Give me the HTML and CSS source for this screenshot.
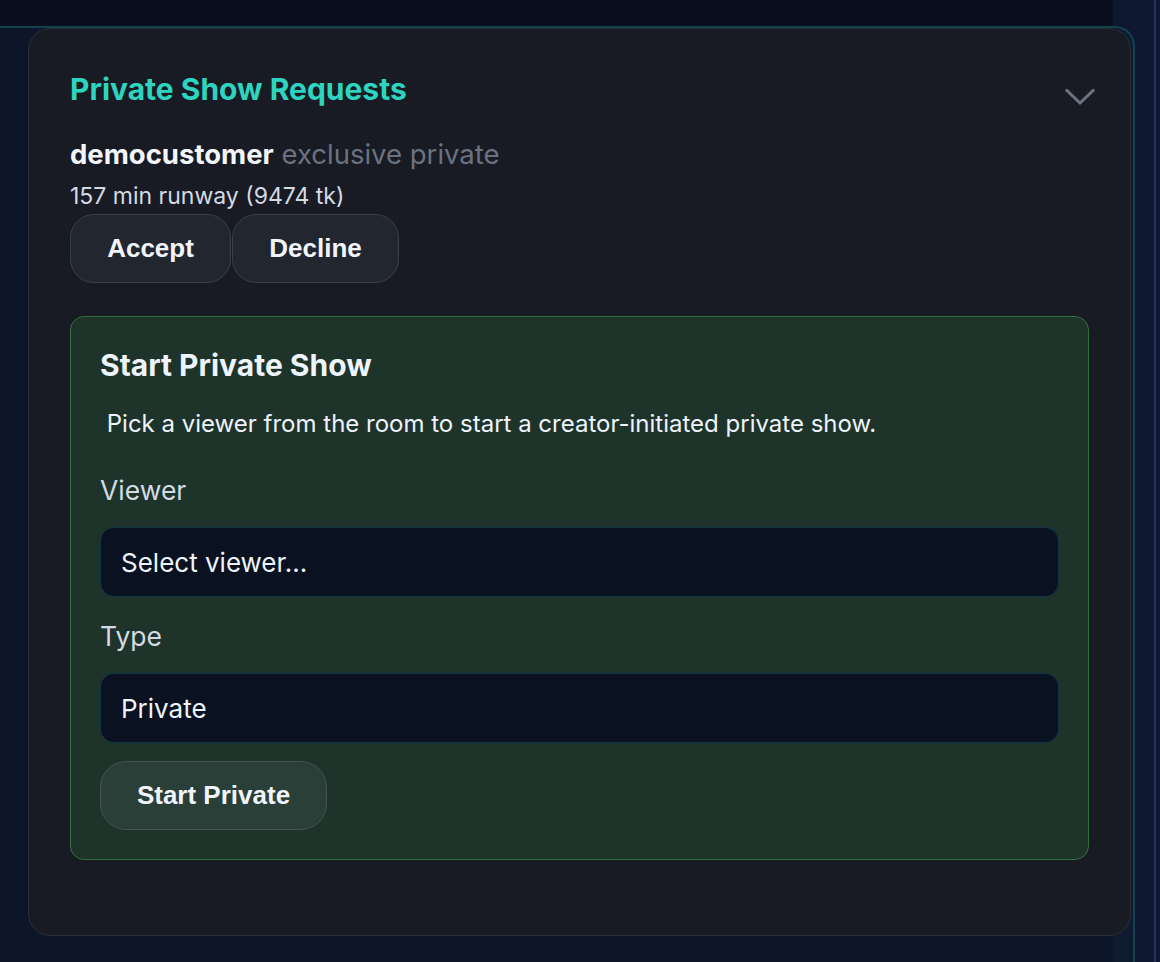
FILE: index.html
```html
<!DOCTYPE html>
<html lang="en">
<head>
    <meta charset="UTF-8">
    <meta name="viewport" content="width=device-width, initial-scale=1.0">
    <title>Private Show Requests</title>
    <link rel="stylesheet" href="styles.css">
</head>
<body>
    <!-- Side panel shell -->
    <div class="shell">
        <section class="card">
            <header class="card-head">
                <h2 class="card-title">Private Show Requests</h2>
                <button class="collapse" aria-label="Collapse">
                    <svg width="30" height="18" viewBox="0 0 30 18" fill="none">
                        <path d="M2 2.5 L15 15 L28 2.5" stroke="#6b7280" stroke-width="3" stroke-linecap="square"/>
                    </svg>
                </button>
            </header>

            <!-- Pending request -->
            <div class="request">
                <p class="request-who"><strong>democustomer</strong> <span class="request-type">exclusive private</span></p>
                <p class="request-meta">157 min runway (9474 tk)</p>
                <div class="actions">
                    <button class="btn">Accept</button>
                    <button class="btn">Decline</button>
                </div>
            </div>

            <!-- Creator initiated -->
            <form class="start-box">
                <h3 class="start-title">Start Private Show</h3>
                <p class="start-hint"> Pick a viewer from the room to start a creator-initiated private show.</p>
                <label class="field-label" for="viewer">Viewer</label>
                <select class="field" id="viewer">
                    <option>Select viewer...</option>
                </select>
                <label class="field-label" for="type">Type</label>
                <select class="field" id="type">
                    <option>Private</option>
                    <option>Exclusive</option>
                </select>
                <button type="button" class="btn btn-start">Start Private</button>
            </form>
        </section>
    </div>
</body>
</html>
```

FILE: styles.css
```css
/* Reset and base styles */
* {
    box-sizing: border-box;
    margin: 0;
    padding: 0;
}

body {
    font-family: Inter, "Noto Sans", sans-serif;
    min-height: 962px;
    overflow: hidden;
    background:
        linear-gradient(to right, transparent 1154px, #2b2d66 1154px, #2b2d66 1156px, transparent 1156px),
        linear-gradient(to right, #0a0f1f 1113px, #0e1830 1113px);
}

/* Shell behind the card */
.shell {
    margin-top: 26px;
    width: 1135px;
    min-height: 936px;
    padding: 0 2px 0 28px;
    background: rgba(14, 30, 50, 0.5);
    border-top: 2px solid #15414d;
    border-right: 2px solid #15414d;
    border-top-right-radius: 20px;
}

/* Card */
.card {
    width: 1103px;
    padding: 42px 41px 75px;
    background: #181b23;
    border: 1px solid #292e38;
    border-radius: 22px;
}

.card-head {
    display: flex;
    justify-content: space-between;
    align-items: flex-start;
}

.card-title {
    color: #2dd4bf;
    font-size: 30px;
    font-weight: 700;
    line-height: 36px;
}

.collapse {
    background: none;
    border: none;
    margin: 17px -6px 0 0;
    cursor: pointer;
}

/* Request row */
.request {
    margin-top: 28px;
}

.request-who {
    font-size: 27.5px;
    line-height: 34px;
    color: #f3f6fb;
}

.request-who strong {
    font-weight: 700;
}

.request-type {
    color: #6b7280;
}

.request-meta {
    margin-top: 11px;
    font-size: 23px;
    line-height: 28px;
    color: #d4dae3;
}

.actions {
    display: flex;
    gap: 1px;
    margin-top: 4px;
}

.btn {
    font-family: "Liberation Sans", Arial, sans-serif;
    font-weight: 700;
    font-size: 26px;
    line-height: 31px;
    color: #f1f5fb;
    background: #22262f;
    border: 1px solid #3a3f49;
    border-radius: 24px;
    padding: 18px 0;
    cursor: pointer;
}

.actions .btn:first-child {
    width: 161px;
}

.actions .btn:last-child {
    width: 167px;
}

/* Start private show box */
.start-box {
    display: flex;
    flex-direction: column;
    align-items: flex-start;
    margin-top: 33px;
    padding: 30px 29px 29px;
    background: #1e332a;
    border: 1.5px solid #346f3d;
    border-radius: 14px;
}

.start-title {
    font-size: 30px;
    font-weight: 700;
    line-height: 36px;
    color: #eef4fb;
}

.start-hint {
    margin-top: 26px;
    font-size: 24px;
    line-height: 29px;
    color: #eef4fb;
    white-space: pre;
}

.field-label {
    margin-top: 37px;
    font-size: 26.5px;
    line-height: 31px;
    color: #d2dbe6;
}

.field + .field-label {
    margin-top: 24px;
}

.field {
    appearance: none;
    width: 100%;
    height: 70px;
    margin-top: 21px;
    padding: 0 20px;
    font-family: Inter, "Noto Sans", sans-serif;
    font-size: 26px;
    color: #eef4fb;
    background: #0a1120;
    border: 1.5px solid #103346;
    border-radius: 14px;
}

.btn-start {
    width: 227px;
    margin-top: 18px;
    background: #2a3f37;
    border-color: #46534f;
    border-radius: 26px;
}
```
